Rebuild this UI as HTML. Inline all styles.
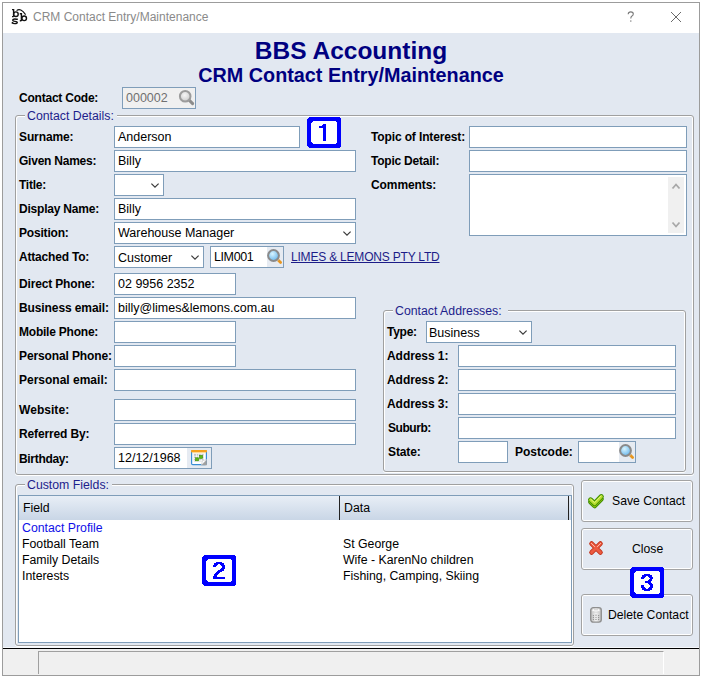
<!DOCTYPE html>
<html><head><meta charset="utf-8">
<style>
*{box-sizing:border-box;margin:0;padding:0}
html,body{width:702px;height:678px;overflow:hidden;background:#fff;position:relative;font-family:"Liberation Sans",sans-serif}
.a{position:absolute}
.win{left:2px;top:2px;width:698px;height:674px;border:1px solid #9c9c9c;background:#e2e8f1}
.tb{left:3px;top:3px;width:696px;height:30px;background:#fff}
.ttl{left:33px;top:10px;font-size:12px;color:#8a8a8a;white-space:nowrap}
.h1{left:0;width:702px;text-align:center;color:#000080;font-weight:bold;white-space:nowrap}
.lb{font-size:12px;font-weight:bold;color:#000;white-space:nowrap;left:19px;letter-spacing:-0.25px}
.in{background:#fff;border:1px solid #7f9db9;height:22px;font-size:12.5px;color:#000;padding:3px 0 0 3px;white-space:nowrap;overflow:hidden}
.gb{border:1px solid #a0a0a0;border-radius:3px;box-shadow:inset 1px 1px 0 #fff,inset -1px 0 0 #fff,0 1px 0 #fff}
.lg{font-size:12.3px;line-height:14px;color:#1e1e8c;background:#e2e8f1;padding:0 3px 0 2px;white-space:nowrap}
.badge{background:#0000ff;clip-path:polygon(2px 0,calc(100% - 2px) 0,100% 2px,100% calc(100% - 2px),calc(100% - 2px) 100%,2px 100%,0 calc(100% - 2px),0 2px)}
.badge i{position:absolute;left:4px;top:4px;right:4px;bottom:4px;background:#fff;clip-path:polygon(2px 0,calc(100% - 2px) 0,100% 2px,100% calc(100% - 2px),calc(100% - 2px) 100%,2px 100%,0 calc(100% - 2px),0 2px)}
.badge b{position:absolute;left:0;right:0;top:0;text-align:center;font-size:24px;line-height:31px;color:#0000ff;font-weight:bold}
.btn{border:1px solid #a3a3a3;border-radius:3px;background:#e2e8f1;box-shadow:inset 0 0 0 1px #fff;font-size:12.2px;color:#000;white-space:nowrap}
.btn span{position:absolute;line-height:14px}
.chev{position:absolute}
.txt{font-size:12.3px;line-height:16px;white-space:nowrap;color:#000}
</style></head><body>
<div class="a win"></div>
<div class="a tb"></div>
<!-- title icon -->
<svg class="a" style="left:8px;top:5px" width="24" height="24" viewBox="0 0 24 24">
 <g fill="none" stroke="#111" stroke-width="1.4">
  <path d="M4 4.6H5.6V11.8M4 11.6H5.6"/>
  <circle cx="7.9" cy="9.2" r="2.3"/>
  <path d="M11.8 8.7H13.4V15.9M11.8 15.7H13.4"/>
  <circle cx="16.2" cy="13.3" r="2.3"/>
  <path d="M9 14.8Q8.6 14 6.8 14Q4.7 14 4.7 15.3Q4.7 16.2 7 16.4Q9.3 16.6 9.3 17.5Q9.3 18.6 6.8 18.6Q4.9 18.6 4.4 17.6M9.1 13.6V15M4.4 17V18.8"/>
  <path d="M8.6 5.6Q12.5 2.4 17.6 9.6" stroke-width="1.2"/>
 </g>
</svg>
<div class="a ttl">CRM Contact Entry/Maintenance</div>
<svg class="a" style="left:627px;top:11px" width="8" height="12" viewBox="0 0 8 12"><path d="M1.2 3.2Q1.3 0.9 3.8 0.9Q6.3 0.9 6.3 3.1Q6.3 4.4 4.7 5.3Q3.8 5.9 3.8 7.4" fill="none" stroke="#7a7a7a" stroke-width="1.1"/><rect x="3.2" y="9.4" width="1.2" height="1.3" fill="#7a7a7a"/></svg>
<svg class="a" style="left:670px;top:11px" width="12" height="12"><path d="M1 1L11 11M11 1L1 11" stroke="#6a6a6a" stroke-width="1"/></svg>

<div class="a h1" style="top:37px;font-size:24.5px">BBS Accounting</div>
<div class="a h1" style="top:64px;font-size:19.8px">CRM Contact Entry/Maintenance</div>

<div class="a lb" style="top:91px;letter-spacing:-0.22px">Contact Code:</div>
<div class="a in" style="left:122px;top:87px;width:74px;height:22px;color:#707070;background:#f0f0f0">000002</div>
<svg class="a" style="left:178px;top:89px" width="18" height="18" viewBox="0 0 18 18">
 <defs><radialGradient id="gl" cx="0.45" cy="0.4" r="0.65"><stop offset="0" stop-color="#f6f6f6"/><stop offset="0.7" stop-color="#d6d6d6"/><stop offset="1" stop-color="#b0b0b0"/></radialGradient></defs>
 <path d="M11.4 11.4L14.6 14.6" stroke="#8c8c8c" stroke-width="3" stroke-linecap="round"/>
 <circle cx="7.2" cy="7.2" r="5.3" fill="url(#gl)" stroke="#9c9c9c" stroke-width="2"/>
</svg>

<!-- Contact details groupbox -->
<div class="a gb" style="left:15px;top:115px;width:679px;height:360px"></div>
<div class="a lg" style="left:25px;top:109px">Contact Details:</div>

<div class="a lb" style="top:130px;letter-spacing:-0.11px">Surname:</div>
<div class="a in" style="left:114px;top:126px;width:186px">Anderson</div>
<svg class="a" style="left:307px;top:117px;z-index:5" width="34" height="31" shape-rendering="crispEdges"><polygon points="2,0 32,0 34,2 34,29 32,31 2,31 0,29 0,2" fill="#0000ff"/><polygon points="6,4 28,4 30,6 30,25 28,27 6,27 4,25 4,6" fill="#fff"/><g fill="#0000ff"><rect x="16" y="7" width="3" height="1"/><rect x="15" y="8" width="4" height="1"/><rect x="12" y="9" width="7" height="1"/><rect x="12" y="10" width="7" height="1"/><rect x="16" y="11" width="3" height="1"/><rect x="16" y="12" width="3" height="1"/><rect x="16" y="13" width="3" height="1"/><rect x="16" y="14" width="3" height="1"/><rect x="16" y="15" width="3" height="1"/><rect x="16" y="16" width="3" height="1"/><rect x="16" y="17" width="3" height="1"/><rect x="16" y="18" width="3" height="1"/><rect x="16" y="19" width="3" height="1"/><rect x="16" y="20" width="3" height="1"/><rect x="16" y="21" width="3" height="1"/><rect x="16" y="22" width="3" height="1"/><rect x="16" y="23" width="3" height="1"/></g></svg>
<div class="a lb" style="top:154px;letter-spacing:-0.23px">Given Names:</div>
<div class="a in" style="left:114px;top:150px;width:242px">Billy</div>
<div class="a lb" style="top:178px;letter-spacing:-0.25px">Title:</div>
<div class="a in" style="left:114px;top:174px;width:50px"></div>
<svg class="chev" style="left:150px;top:182px" width="10" height="7"><path d="M1.4 1.6L5 5.2L8.6 1.6" fill="none" stroke="#383838" stroke-width="1.15"/></svg>
<div class="a lb" style="top:202px;letter-spacing:-0.21px">Display Name:</div>
<div class="a in" style="left:114px;top:198px;width:242px">Billy</div>
<div class="a lb" style="top:226px;letter-spacing:-0.19px">Position:</div>
<div class="a in" style="left:114px;top:222px;width:242px">Warehouse Manager</div>
<svg class="chev" style="left:342px;top:230px" width="10" height="7"><path d="M1.4 1.6L5 5.2L8.6 1.6" fill="none" stroke="#383838" stroke-width="1.15"/></svg>
<div class="a lb" style="top:250px;letter-spacing:-0.19px">Attached To:</div>
<div class="a in" style="left:114px;top:246px;width:90px;padding-top:4px">Customer</div>
<svg class="chev" style="left:190px;top:254px" width="10" height="7"><path d="M1.4 1.6L5 5.2L8.6 1.6" fill="none" stroke="#383838" stroke-width="1.15"/></svg>
<div class="a in" style="left:210px;top:246px;width:74px;letter-spacing:-0.4px">LIM001</div>
<div class="a" style="left:267px;top:247px;width:16px;height:20px;background:#e6ebf2"></div>
<svg class="a" style="left:266px;top:248px" width="18" height="18" viewBox="0 0 18 18">
 <defs><radialGradient id="bl" cx="0.4" cy="0.35" r="0.75"><stop offset="0" stop-color="#d8f4ff"/><stop offset="1" stop-color="#5aaee8"/></radialGradient></defs>
 <path d="M11.6 11.6L14.6 14.6" stroke="#e8961e" stroke-width="2.8" stroke-linecap="round"/>
 <path d="M11.2 11.2L12.4 12.4" stroke="#c8c8c8" stroke-width="2"/>
 <circle cx="7.5" cy="7.5" r="5.4" fill="url(#bl)" stroke="#8a8a8a" stroke-width="2"/>
</svg>
<div class="a" style="left:291px;top:250px;font-size:12px;letter-spacing:-0.2px;color:#1c1c88;text-decoration:underline;white-space:nowrap">LIMES &amp; LEMONS PTY LTD</div>
<div class="a lb" style="top:277px;letter-spacing:-0.16px">Direct Phone:</div>
<div class="a in" style="left:114px;top:273px;width:122px">02 9956 2352</div>
<div class="a lb" style="top:301px;letter-spacing:-0.1px">Business email:</div>
<div class="a in" style="left:114px;top:297px;width:242px">billy@limes&amp;lemons.com.au</div>
<div class="a lb" style="top:325px;letter-spacing:-0.22px">Mobile Phone:</div>
<div class="a in" style="left:114px;top:321px;width:122px"></div>
<div class="a lb" style="top:349px;letter-spacing:-0.12px">Personal Phone:</div>
<div class="a in" style="left:114px;top:345px;width:122px"></div>
<div class="a lb" style="top:373px;letter-spacing:0.0px">Personal email:</div>
<div class="a in" style="left:114px;top:369px;width:242px"></div>
<div class="a lb" style="top:403px;letter-spacing:0.05px">Website:</div>
<div class="a in" style="left:114px;top:399px;width:242px"></div>
<div class="a lb" style="top:427px;letter-spacing:-0.13px">Referred By:</div>
<div class="a in" style="left:114px;top:423px;width:242px"></div>
<div class="a lb" style="top:452px;letter-spacing:-0.32px">Birthday:</div>
<div class="a in" style="left:114px;top:447px;width:98px">12/12/1968</div>
<div class="a" style="left:187px;top:448px;width:24px;height:20px;background:#e6ebf2"></div>
<svg class="a" style="left:190px;top:449px" width="18" height="18" viewBox="0 0 18 18">
 <rect x="1.6" y="1.6" width="14.8" height="14" rx="1.2" fill="#fff" stroke="#3a8ed6" stroke-width="1.2"/>
 <rect x="1" y="1" width="16" height="2.4" rx="0.8" fill="#f6a11c"/>
 <rect x="2.2" y="3.4" width="13.6" height="0.8" fill="#ffe0a0"/>
 <rect x="3.8" y="4.8" width="9.8" height="7.6" fill="#c4c4c4"/>
 <g fill="#fff"><rect x="6" y="4.8" width="0.7" height="7.6"/><rect x="8.4" y="4.8" width="0.7" height="7.6"/><rect x="10.8" y="4.8" width="0.7" height="7.6"/><rect x="3.8" y="6.8" width="9.8" height="0.7"/><rect x="3.8" y="9.1" width="9.8" height="0.7"/><rect x="3.8" y="11.4" width="9.8" height="0.7"/></g>
 <rect x="5.6" y="8.8" width="3" height="3" fill="#5ab814" stroke="#3a8a00" stroke-width=".6"/>
 <rect x="9.6" y="6.4" width="3" height="3" fill="#5ab814" stroke="#3a8a00" stroke-width=".6"/>
 <path d="M11.2 16.2L16.8 10.6V16.2Z" fill="#a0a0a0"/>
 <path d="M11.2 16.2L16.8 10.6L12.6 11.6Z" fill="#fff" stroke="#b8b8b8" stroke-width=".5"/>
</svg>

<div class="a lb" style="left:371px;top:130px;letter-spacing:-0.13px">Topic of Interest:</div>
<div class="a in" style="left:469px;top:126px;width:218px"></div>
<div class="a lb" style="left:371px;top:154px;letter-spacing:-0.22px">Topic Detail:</div>
<div class="a in" style="left:469px;top:150px;width:218px"></div>
<div class="a lb" style="left:371px;top:178px;letter-spacing:-0.08px">Comments:</div>
<div class="a in" style="left:469px;top:174px;width:218px;height:62px"></div>
<div class="a" style="left:668px;top:177px;width:16px;height:56px;background:#f0f0f0"></div>
<svg class="a" style="left:671px;top:182px" width="10" height="9"><path d="M1.5 6.5L5 2.5L8.5 6.5" fill="none" stroke="#a8a8a8" stroke-width="1.8"/></svg>
<svg class="a" style="left:671px;top:220px" width="10" height="9"><path d="M1.5 2.5L5 6.5L8.5 2.5" fill="none" stroke="#a8a8a8" stroke-width="1.8"/></svg>

<!-- Contact addresses -->
<div class="a gb" style="left:383px;top:310px;width:303px;height:162px"></div>
<div class="a lg" style="left:393px;top:304px;padding-right:6px">Contact Addresses:</div>
<div class="a lb" style="left:387px;top:325px;letter-spacing:-0.25px">Type:</div>
<div class="a in" style="left:426px;top:321px;width:106px;padding-top:4px;padding-left:2px">Business</div>
<svg class="chev" style="left:518px;top:329px" width="10" height="7"><path d="M1.4 1.6L5 5.2L8.6 1.6" fill="none" stroke="#383838" stroke-width="1.15"/></svg>
<div class="a lb" style="left:387px;top:349px;letter-spacing:-0.06px">Address 1:</div>
<div class="a in" style="left:458px;top:345px;width:218px"></div>
<div class="a lb" style="left:387px;top:373px;letter-spacing:-0.06px">Address 2:</div>
<div class="a in" style="left:458px;top:369px;width:218px"></div>
<div class="a lb" style="left:387px;top:397px;letter-spacing:-0.06px">Address 3:</div>
<div class="a in" style="left:458px;top:393px;width:218px"></div>
<div class="a lb" style="left:388px;top:421px;letter-spacing:-0.45px">Suburb:</div>
<div class="a in" style="left:458px;top:417px;width:218px"></div>
<div class="a lb" style="left:388px;top:445px;letter-spacing:-0.12px">State:</div>
<div class="a in" style="left:458px;top:441px;width:50px"></div>
<div class="a lb" style="left:515px;top:445px;letter-spacing:-0.02px">Postcode:</div>
<div class="a in" style="left:578px;top:441px;width:58px"></div>
<div class="a" style="left:619px;top:442px;width:16px;height:20px;background:#e6ebf2"></div>
<svg class="a" style="left:618px;top:443px" width="18" height="18" viewBox="0 0 18 18">
 <path d="M11.6 11.6L14.6 14.6" stroke="#e8961e" stroke-width="2.8" stroke-linecap="round"/>
 <path d="M11.2 11.2L12.4 12.4" stroke="#c8c8c8" stroke-width="2"/>
 <circle cx="7.5" cy="7.5" r="5.4" fill="url(#bl)" stroke="#8a8a8a" stroke-width="2"/>
</svg>

<!-- Custom fields -->
<div class="a gb" style="left:15px;top:484px;width:559px;height:162px"></div>
<div class="a lg" style="left:25px;top:478px">Custom Fields:</div>
<div class="a" style="left:18px;top:495px;width:554px;height:148px;background:#fff;border:1px solid #7f9db9"></div>
<div class="a" style="left:19px;top:496px;width:552px;height:24px;background:linear-gradient(#e8eef6,#c9d6e6)"></div>
<div class="a txt" style="left:23px;top:500px">Field</div>
<div class="a" style="left:339px;top:496px;width:1px;height:24px;background:#222"></div>
<div class="a txt" style="left:344px;top:500px">Data</div>
<div class="a" style="left:568px;top:496px;width:1px;height:24px;background:#222"></div>
<div class="a txt" style="left:22px;top:520px"><span style="color:#1010e8">Contact Profile</span><br>Football Team<br>Family Details<br>Interests</div>
<div class="a txt" style="left:343px;top:536px">St George<br>Wife - KarenNo children<br>Fishing, Camping, Skiing</div>
<svg class="a" style="left:202px;top:555px;z-index:5" width="34" height="31" shape-rendering="crispEdges"><polygon points="2,0 32,0 34,2 34,29 32,31 2,31 0,29 0,2" fill="#0000ff"/><polygon points="6,4 28,4 30,6 30,25 28,27 6,27 4,25 4,6" fill="#fff"/><g fill="#0000ff"><rect x="14" y="7" width="6" height="1"/><rect x="12" y="8" width="10" height="1"/><rect x="12" y="9" width="4" height="1"/><rect x="18" y="9" width="4" height="1"/><rect x="11" y="10" width="4" height="1"/><rect x="19" y="10" width="4" height="1"/><rect x="11" y="11" width="3" height="1"/><rect x="20" y="11" width="3" height="1"/><rect x="20" y="12" width="3" height="1"/><rect x="19" y="13" width="4" height="1"/><rect x="18" y="14" width="4" height="1"/><rect x="16" y="15" width="6" height="1"/><rect x="15" y="16" width="5" height="1"/><rect x="14" y="17" width="4" height="1"/><rect x="13" y="18" width="4" height="1"/><rect x="12" y="19" width="4" height="1"/><rect x="12" y="20" width="3" height="1"/><rect x="11" y="21" width="4" height="1"/><rect x="11" y="22" width="12" height="1"/><rect x="11" y="23" width="12" height="1"/></g></svg>

<!-- buttons -->
<div class="a btn" style="left:581px;top:480px;width:112px;height:42px"><span style="left:30px;top:13px">Save Contact</span></div>
<svg class="a" style="left:586px;top:491px" width="20" height="20" viewBox="0 0 20 20">
 <path d="M4.6 11L8.6 14.8L15.3 8" fill="none" stroke="#3f8e00" stroke-width="5" stroke-linejoin="round" stroke-linecap="round"/>
 <path d="M4.6 11L8.6 14.8L15.3 8" fill="none" stroke="#9cc614" stroke-width="3" stroke-linejoin="round" stroke-linecap="round"/>
 <path d="M4.6 8.8L8.6 12.6L15.3 5.6" fill="none" stroke="#3f8e00" stroke-width="5" stroke-linejoin="round" stroke-linecap="round"/>
 <path d="M4.6 8.8L8.6 12.6L15.3 5.6" fill="none" stroke="#b6de2c" stroke-width="3" stroke-linejoin="round" stroke-linecap="round"/>
 <path d="M4.8 8.3L8.6 11.7L15.1 5" fill="none" stroke="#e4f680" stroke-width="1" stroke-linecap="round"/>
</svg>
<div class="a btn" style="left:581px;top:528px;width:112px;height:42px"><span style="left:50px;top:13px">Close</span></div>
<svg class="a" style="left:586px;top:538px" width="20" height="20" viewBox="0 0 20 20">
 <path d="M5.6 5.6L14.4 14.4M14.4 5.6L5.6 14.4" stroke="#c03018" stroke-width="4.8" stroke-linecap="round"/>
 <path d="M5.6 5.6L14.4 14.4M14.4 5.6L5.6 14.4" stroke="#ec5a40" stroke-width="3" stroke-linecap="round"/>
 <path d="M5.4 5.4L8.6 8.6M14.6 5.4L11.4 8.6" stroke="#ffb8a8" stroke-width="1" stroke-linecap="round"/>
</svg>
<svg class="a" style="left:630px;top:567px;z-index:5" width="34" height="31" shape-rendering="crispEdges"><polygon points="2,0 32,0 34,2 34,29 32,31 2,31 0,29 0,2" fill="#0000ff"/><polygon points="6,4 28,4 30,6 30,25 28,27 6,27 4,25 4,6" fill="#fff"/><g fill="#0000ff"><rect x="14" y="7" width="6" height="1"/><rect x="12" y="8" width="10" height="1"/><rect x="12" y="9" width="4" height="1"/><rect x="18" y="9" width="4" height="1"/><rect x="11" y="10" width="4" height="1"/><rect x="19" y="10" width="4" height="1"/><rect x="11" y="11" width="3" height="1"/><rect x="20" y="11" width="3" height="1"/><rect x="19" y="12" width="3" height="1"/><rect x="18" y="13" width="4" height="1"/><rect x="15" y="14" width="6" height="1"/><rect x="15" y="15" width="6" height="1"/><rect x="18" y="16" width="4" height="1"/><rect x="19" y="17" width="4" height="1"/><rect x="11" y="18" width="3" height="1"/><rect x="20" y="18" width="3" height="1"/><rect x="11" y="19" width="3" height="1"/><rect x="20" y="19" width="3" height="1"/><rect x="11" y="20" width="4" height="1"/><rect x="19" y="20" width="4" height="1"/><rect x="12" y="21" width="4" height="1"/><rect x="18" y="21" width="4" height="1"/><rect x="12" y="22" width="10" height="1"/><rect x="14" y="23" width="6" height="1"/></g></svg>
<div class="a btn" style="left:581px;top:594px;width:112px;height:42px"><span style="left:26px;top:13px">Delete Contact</span></div>
<svg class="a" style="left:589px;top:606px" width="14" height="18" viewBox="0 0 14 18">
 <defs><linearGradient id="dg" x1="0" x2="1"><stop offset="0" stop-color="#bdbdbd"/><stop offset=".5" stop-color="#f4f4f4"/><stop offset="1" stop-color="#bdbdbd"/></linearGradient></defs>
 <rect x="1.7" y="1.6" width="10.6" height="14.6" rx="2.6" fill="url(#dg)" stroke="#8e8e8e" stroke-width="1.3"/>
 <ellipse cx="7" cy="4.2" rx="4.1" ry="1.9" fill="#fafafa" stroke="#b4b4b4" stroke-width=".5"/>
 <g fill="#8a8a8a"><circle cx="6" cy="3.7" r=".5"/><circle cx="8" cy="3.7" r=".5"/>
 <circle cx="4.4" cy="9.6" r=".65"/><circle cx="7" cy="9.2" r=".65"/><circle cx="9.6" cy="9.6" r=".65"/>
 <circle cx="4.4" cy="11.6" r=".65"/><circle cx="7" cy="11.3" r=".65"/><circle cx="9.6" cy="11.6" r=".65"/>
 <circle cx="4.4" cy="13.6" r=".65"/><circle cx="7" cy="13.4" r=".65"/><circle cx="9.6" cy="13.6" r=".65"/></g>
</svg>

<!-- status bar -->
<div class="a" style="left:3px;top:647px;width:696px;height:1px;background:#f6f8fb"></div>
<div class="a" style="left:3px;top:648px;width:696px;height:1px;background:#000"></div>
<div class="a" style="left:3px;top:649px;width:696px;height:26px;background:#f0f0f0"></div>
<div class="a" style="left:38px;top:651px;width:626px;height:23px;border-left:1px solid #a0a0a0;border-top:1px solid #a0a0a0;border-right:1px solid #fff"></div>
</body></html>
